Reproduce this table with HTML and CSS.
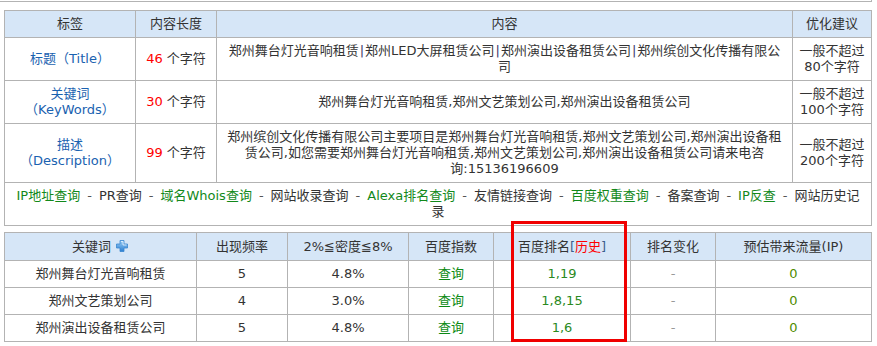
FILE: index.html
```html
<!DOCTYPE html>
<html>
<head>
  <meta charset="utf-8">
  <title>SEO综合查询</title>
  <link rel="stylesheet" href="styles.css">
</head>
<body>
  <div class="prev-box"></div>

  <table class="info">
    <colgroup>
      <col style="width:131px">
      <col style="width:81px">
      <col style="width:576px">
      <col style="width:79px">
    </colgroup>
    <thead>
      <tr>
        <th>标签</th>
        <th>内容长度</th>
        <th>内容</th>
        <th>优化建议</th>
      </tr>
    </thead>
    <tbody>
      <tr>
        <td class="label">标题（Title）</td>
        <td><span class="num">46</span> 个字符</td>
        <td class="content">郑州舞台灯光音响租赁<span class="bar">|</span>郑州LED大屏租赁公司<span class="bar">|</span>郑州演出设备租赁公司<span class="bar">|</span>郑州缤创文化传播有限公司</td>
        <td>一般不超过80个字符</td>
      </tr>
      <tr>
        <td class="label">关键词<br>（KeyWords）</td>
        <td><span class="num">30</span> 个字符</td>
        <td class="content">郑州舞台灯光音响租赁,郑州文艺策划公司,郑州演出设备租赁公司</td>
        <td>一般不超过100个字符</td>
      </tr>
      <tr>
        <td class="label">描述<br>（Description）</td>
        <td><span class="num">99</span> 个字符</td>
        <td class="content">郑州缤创文化传播有限公司主要项目是郑州舞台灯光音响租赁,郑州文艺策划公司,郑州演出设备租赁公司,如您需要郑州舞台灯光音响租赁,郑州文艺策划公司,郑州演出设备租赁公司请来电咨询:15136196609</td>
        <td>一般不超过200个字符</td>
      </tr>
      <tr>
        <td colspan="4" class="links">
          <span class="g">IP地址查询</span><span class="sep">-</span><span>PR查询</span><span class="sep">-</span><span class="g">域名Whois查询</span><span class="sep">-</span><span>网站收录查询</span><span class="sep">-</span><span class="g">Alexa排名查询</span><span class="sep">-</span><span>友情链接查询</span><span class="sep">-</span><span class="g">百度权重查询</span><span class="sep">-</span><span>备案查询</span><span class="sep">-</span><span class="g">IP反查</span><span class="sep">-</span><span>网站历史记录</span>
        </td>
      </tr>
    </tbody>
  </table>

  <table class="keywords">
    <colgroup>
      <col style="width:192px">
      <col style="width:91px">
      <col style="width:121px">
      <col style="width:85px">
      <col style="width:137px">
      <col style="width:85px">
      <col style="width:156px">
    </colgroup>
    <thead>
      <tr>
        <th>关键词 <svg class="plus" width="14" height="14" viewBox="0 0 14 14">
            <defs>
              <linearGradient id="pg" x1="0" y1="0" x2="0" y2="1">
                <stop offset="0" stop-color="#9fd0f5"/>
                <stop offset="1" stop-color="#2b7fd2"/>
              </linearGradient>
            </defs>
            <path d="M5 1.5h4v3.5h3.5v4H9v3.5H5V9H1.5V5H5z" fill="url(#pg)" stroke="#3a86cf" stroke-width="0.8"/>
            <path d="M6 2.5h2v3.5h3.5" fill="none" stroke="#e6f3ff" stroke-width="0.8"/>
          </svg></th>
        <th>出现频率</th>
        <th>2%≦密度≦8%</th>
        <th>百度指数</th>
        <th>百度排名<span class="br">[</span><span class="red">历史</span><span class="br">]</span></th>
        <th>排名变化</th>
        <th>预估带来流量(IP)</th>
      </tr>
    </thead>
    <tbody>
      <tr>
        <td>郑州舞台灯光音响租赁</td>
        <td>5</td>
        <td>4.8%</td>
        <td class="link">查询</td>
        <td class="rank">1,19</td>
        <td class="dash">-</td>
        <td class="ip">0</td>
      </tr>
      <tr>
        <td>郑州文艺策划公司</td>
        <td>4</td>
        <td>3.0%</td>
        <td class="link">查询</td>
        <td class="rank">1,8,15</td>
        <td class="dash">-</td>
        <td class="ip">0</td>
      </tr>
      <tr>
        <td>郑州演出设备租赁公司</td>
        <td>5</td>
        <td>4.8%</td>
        <td class="link">查询</td>
        <td class="rank">1,6</td>
        <td class="dash">-</td>
        <td class="ip">0</td>
      </tr>
    </tbody>
  </table>

  <div class="highlight"></div>
</body>
</html>
```

FILE: styles.css
```css
/* SEO info tables */
body {
  margin: 0;
  font-family: "DejaVu Sans", "Noto Sans CJK SC", sans-serif;
  font-size: 13px;
  line-height: 16px;
  color: #333;
  background: #fff;
}

.prev-box {
  width: 871px;
  height: 0;
  border-bottom: 1px solid #b3b3b3;
  border-right: 1px solid #b3b3b3;
  margin-top: -1px;
  padding-top: 2px;
  box-sizing: content-box;
}

table {
  border-collapse: collapse;
  table-layout: fixed;
  width: 868px;
  margin-left: 4px;
}

th, td {
  border: 1px solid #b3b3b3;
  padding: 5px 6px;
  text-align: center;
  vertical-align: middle;
}

th {
  font-weight: normal;
  background-color: #d6e6f7;
  color: #333;
}

.info {
  margin-top: 8px;
}

.info .content {
  padding: 5px 10px;
}

.bar {
  margin: 0 1px;
  color: #3a3a6a;
}

.keywords {
  margin-top: 6px;
}

.keywords th {
  padding: 6px 4px 5px;
}

.keywords td {
  padding: 5px 4px;
}

.label {
  color: #1a62b0;
}

.num {
  color: #ff0000;
}

.links {
  padding: 5px 8px;
}

.g {
  color: #12891a;
}

.sep {
  margin: 0 7px;
  color: #555;
}

.plus {
  vertical-align: -2px;
}

.br {
  color: #3b5f8c;
}

.red {
  color: #ff0000;
}

.link {
  color: #0c8a14;
}

.rank {
  color: #2b8a1e;
}

.dash {
  color: #999;
}

.ip {
  color: #4e8c00;
}

.highlight {
  position: absolute;
  left: 511px;
  top: 221px;
  width: 110px;
  height: 115px;
  border: 3px solid #f00000;
}
```
